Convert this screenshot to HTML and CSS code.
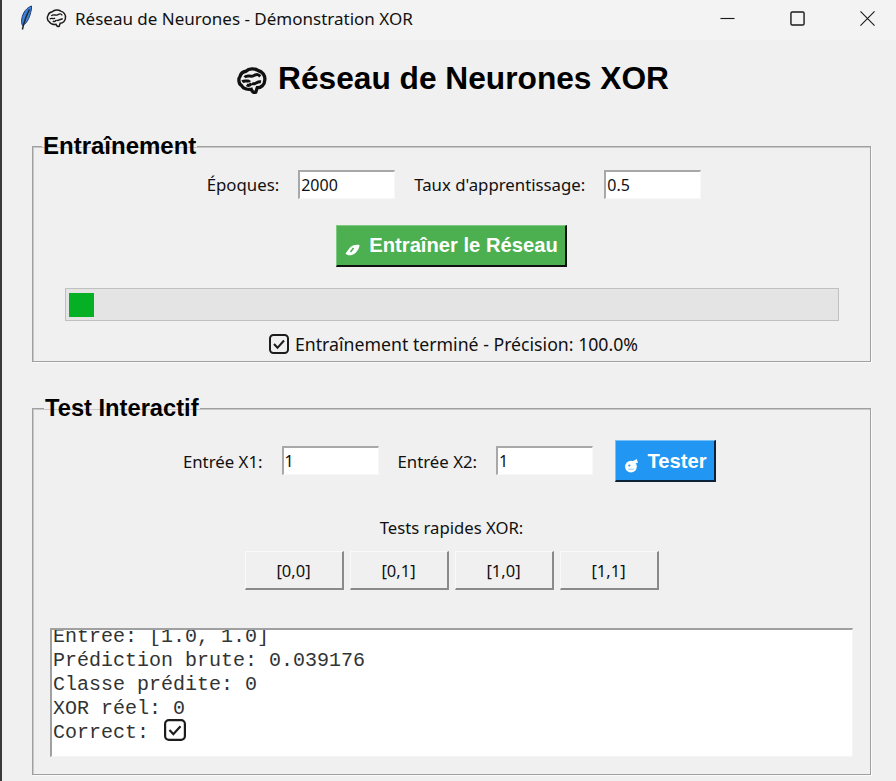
FILE: index.html
```html
<!DOCTYPE html>
<html lang="fr">

<head>
  <meta charset="utf-8">
  <title>Réseau de Neurones - Démonstration XOR</title>
  <link rel="stylesheet" href="styles.css">
</head>

<body>
  <div class="titlebar">
    <svg class="feather" viewBox="0 0 14 26">
      <path d="M12.500 1C8 2.500 4 7 2.800 13.500C2.300 16.500 2.500 18.500 3.500 20.500C6.500 19.500 9.500 15 11 10C12 6.500 12.800 3.500 12.500 1Z" fill="#3f7fd6" stroke="#1d3f78" stroke-width="1"/>
      <path d="M10.500 4.500C8 9 5.500 15 3.400 24.500" fill="none" stroke="#20262e" stroke-width="1.500"/>
    </svg>
    <svg class="brain-small" viewBox="0 0 20 20">
      <path d="M6 3.500C8 1.500 12 1.500 14 3C17 3.500 19 6.500 18.500 9.500C18.500 12.500 16 14.500 13.500 14.500L12.500 17.500C11 18 10 17 9.500 15.500C7 16 4 15 3 13C1 12 .8 8.500 2 7C2.500 5 4 3.800 6 3.500Z" fill="none" stroke="#1a1a1a" stroke-width="1.400"/>
      <path d="M5 7.500C7 5.500 9 7.500 11 6.500S14 5 15.500 7M3.500 10.500C5.500 9 7.500 11 8.500 9.500M10 11.500C12 13 13 10 16 10.500M6.500 12.500C8 13.500 9 12.500 9.500 11.500" fill="none" stroke="#1a1a1a" stroke-width="1.300"/>
    </svg>
    <span class="window-title">Réseau de Neurones - Démonstration XOR</span>
    <div class="window-buttons">
      <svg viewBox="0 0 16 16"><path d="M.500 8H15.500" stroke="#1a1a1a" stroke-width="1.200" fill="none"/></svg>
      <svg viewBox="0 0 16 16"><rect x="1" y="1" width="14" height="14" rx="1.500" stroke="#1a1a1a" stroke-width="1.500" fill="none"/></svg>
      <svg viewBox="0 0 16 16"><path d="M.500 .500L15.500 15.500M15.500 .500L.500 15.500" stroke="#1a1a1a" stroke-width="1.200" fill="none"/></svg>
    </div>
  </div>

  <h1 class="app-title">
    <svg class="brain-big" viewBox="0 0 20 20">
      <path d="M6 3.500C8 1.500 12 1.500 14 3C17 3.500 19 6.500 18.500 9.500C18.500 12.500 16 14.500 13.500 14.500L12.500 17.500C11 18 10 17 9.500 15.500C7 16 4 15 3 13C1 12 .8 8.500 2 7C2.500 5 4 3.800 6 3.500Z" fill="none" stroke="#111" stroke-width="2.200"/>
      <path d="M5 7.500C7 5.500 9 7.500 11 6.500S14 5 15.500 7M3.500 10.500C5.500 9 7.500 11 8.500 9.500M10 11.500C12 13 13 10 16 10.500M6.500 12.500C8 13.500 9 12.500 9.500 11.500" fill="none" stroke="#111" stroke-width="2"/>
    </svg>
    Réseau de Neurones XOR
  </h1>

  <fieldset class="group group-train">
    <legend>Entraînement</legend>
    <div class="row params-row">
      <label class="field-label">Époques:</label>
      <input class="entry" value="2000">
      <label class="field-label">Taux d'apprentissage:</label>
      <input class="entry" value="0.5">
    </div>
    <div class="row train-row">
      <button class="action action-green">
        <svg class="action-icon" viewBox="0 0 16 12"><path d="M1 9.500L5.500 3.500C8 1 12 .5 15 1C15 4 12.500 8 9.500 10C7 11.500 3 12 1 9.500Z" fill="#fff"/><path d="M6 8L9 4" stroke="#4caf50" stroke-width="1.500"/></svg>
        Entraîner le Réseau
      </button>
    </div>
    <div class="progress"><div class="progress-fill"></div></div>
    <div class="status">
      <svg class="check" viewBox="0 0 20 20"><rect x="1" y="1" width="18" height="18" rx="3.500" fill="none" stroke="#1c1c1c" stroke-width="2"/><path d="M5 10L8.500 13.800L15 6.500" fill="none" stroke="#1c1c1c" stroke-width="2"/></svg>
      Entraînement terminé - Précision: 100.0%
    </div>
  </fieldset>

  <fieldset class="group group-test">
    <legend>Test Interactif</legend>
    <div class="row test-row">
      <label class="field-label">Entrée X1:</label>
      <input class="entry" value="1">
      <label class="field-label">Entrée X2:</label>
      <input class="entry" value="1">
      <button class="action action-blue">
        <svg class="action-icon icon-test" viewBox="0 0 14 14"><circle cx="6.500" cy="8" r="5.500" fill="#fff"/><path d="M8 3L12 1L13 4.500L9 5.500Z" fill="#fff"/><circle cx="5" cy="7" r="1" fill="#2196f3"/><path d="M4 10.500H9" stroke="#9ccbf5" stroke-width="1"/></svg>
        Tester
      </button>
    </div>
    <div class="quick-label">Tests rapides XOR:</div>
    <div class="quick-row">
      <button class="quick">[0,0]</button>
      <button class="quick">[0,1]</button>
      <button class="quick">[1,0]</button>
      <button class="quick">[1,1]</button>
    </div>
    <div class="output">
      <div class="output-text">
        <div>Entrée: [1.0, 1.0]</div>
        <div>Prédiction brute: 0.039176</div>
        <div>Classe prédite: 0</div>
        <div>XOR réel: 0</div>
        <div class="output-last">Correct: <svg class="check check-mono" viewBox="0 0 20 20"><rect x="1" y="1" width="18" height="18" rx="3.500" fill="none" stroke="#1c1c1c" stroke-width="2"/><path d="M5 10L8.500 13.800L15 6.500" fill="none" stroke="#1c1c1c" stroke-width="2"/></svg></div>
      </div>
    </div>
  </fieldset>
</body>

</html>
```

FILE: styles.css
```css
html, body {
  margin: 0;
  height: 781px;
  overflow: hidden;
}

body {
  background-color: #f0f0f0;
  color: #111;
  font-family: 'Noto Sans', sans-serif;
  border-left: 2px solid #3a3a3c;
  box-sizing: border-box;
  width: 896px;
}

/* window title */
.titlebar {
  display: flex;
  align-items: center;
  box-sizing: border-box;
  height: 40px;
  background-color: #f3f3f3;
  padding: 0 0 4px 17px;
  font-family: 'Noto Sans', sans-serif;
  font-size: 17px;
}

.feather {
  width: 14px;
  height: 26px;
  margin-right: 13px;
}

.brain-small {
  width: 21px;
  height: 21px;
  margin-right: 8px;
}

.window-buttons {
  display: flex;
  align-items: center;
  gap: 55px;
  margin-left: auto;
  margin-right: 21px;
}

.window-buttons svg {
  width: 15px;
  height: 15px;
}

.app-title {
  display: flex;
  align-items: center;
  justify-content: center;
  gap: 11px;
  height: 34px;
  margin: 21px 0 0 0;
  padding-left: 8px;
  font-family: 'Liberation Sans', sans-serif;
  font-size: 31.7px;
  font-weight: 700;
  color: #000;
}

.brain-big {
  width: 30px;
  height: 30px;
  margin-top: 6px;
}

/* group boxes */
.group {
  box-sizing: border-box;
  width: 839px;
  margin: 0 0 0 30px;
  padding: 0;
  border: 1px solid #a0a0a0;
  box-shadow: 1px 1px 0 #fafafa, inset 1px 1px 0 #c8c8c8;
  min-width: 0;
}

.group legend {
  margin-left: 9px;
  padding: 0 1px;
  height: 24px;
  line-height: 24px;
  font-family: 'Liberation Sans', sans-serif;
  font-size: 24px;
  font-weight: 700;
  color: #000;
}

.group-train {
  height: 228px;
  margin-top: 39px;
}

.group-test {
  height: 379px;
  margin-top: 34px;
}

.group-test legend {
  margin-left: 11px;
  font-size: 23.7px;
}

.row {
  display: flex;
  align-items: center;
  justify-content: center;
}

.field-label {
  font-size: 16.8px;
  margin-right: 19px;
}

.entry {
  box-sizing: border-box;
  width: 97px;
  height: 29px;
  margin-right: 19px;
  padding: 0 1px;
  border: 0;
  border-top: 2px solid #a8a8a8;
  border-left: 2px solid #a8a8a8;
  border-right: 1px solid #f8f8f8;
  border-bottom: 1px solid #f8f8f8;
  background-color: #fff;
  font-family: 'Noto Sans', sans-serif;
  font-size: 16px;
  color: #111;
  outline: none;
}

.action {
  display: flex;
  align-items: center;
  justify-content: center;
  box-sizing: border-box;
  padding: 0;
  font-family: 'Liberation Sans', sans-serif;
  font-size: 20.2px;
  font-weight: 700;
  color: #fff;
  border-style: solid;
  border-width: 1px 2px 2px 1px;
}

.action-green {
  width: 231px;
  height: 42px;
  background-color: #4caf50;
  border-color: #7fca83 #111 #111 #7fca83;
}

.action-blue {
  width: 101px;
  height: 42px;
  padding-top: 2px;
  background-color: #2196f3;
  border-color: #7cc0f8 #0b2238 #0b2238 #7cc0f8;
}

.action-icon {
  width: 17px;
  height: 12px;
  margin: 9px 8px 0 0;
}

.icon-test {
  width: 15px;
  height: 15px;
  margin: 7px 9px 0 0;
}

.params-row {
  margin-top: 12px;
  padding-left: 24px;
}

.train-row {
  margin-top: 26px;
}

.progress {
  box-sizing: border-box;
  width: 774px;
  height: 33px;
  margin: 21px 0 0 32px;
  padding: 4px 3px;
  background-color: #e4e4e4;
  border: 1px solid #c0c0c0;
}

.progress-fill {
  width: 25px;
  height: 24px;
  background-color: #06b025;
}

.status {
  display: flex;
  align-items: center;
  justify-content: center;
  gap: 6px;
  margin-top: 12px;
  padding-left: 4px;
  font-size: 17.7px;
  line-height: 22px;
}

.check {
  width: 20px;
  height: 20px;
}

.check-mono {
  width: 22px;
  height: 22px;
  margin-left: 3px;
  vertical-align: top;
  margin-top: -2px;
}

.test-row {
  margin-top: 20px;
  padding-right: 4px;
  height: 42px;
}

.test-row .entry {
  margin-bottom: 2px;
}

.test-row .entry:last-of-type {
  margin-right: 22px;
}

.quick-label {
  margin-top: 34px;
  text-align: center;
  font-size: 16.7px;
  line-height: 24px;
}

.quick-row {
  display: flex;
  justify-content: center;
  gap: 6px;
  margin-top: 11px;
}

.quick {
  box-sizing: border-box;
  width: 99px;
  height: 39px;
  padding: 0;
  background-color: #f0f0f0;
  border-style: solid;
  border-width: 1px 2px 2px 1px;
  border-color: #fafafa #8a8a8a #8a8a8a #fafafa;
  font-family: 'Noto Sans', sans-serif;
  font-size: 16.5px;
  color: #111;
}

.output {
  box-sizing: border-box;
  width: 803px;
  height: 129px;
  margin: 38px 0 0 17px;
  overflow: hidden;
  background-color: #fff;
  border-top: 2px solid #a0a0a0;
  border-left: 2px solid #a0a0a0;
  border-right: 1px solid #f4f4f4;
  border-bottom: 1px solid #f4f4f4;
}

.output-text {
  margin: -5px 0 0 1px;
  font-family: 'Liberation Mono', monospace;
  font-size: 20px;
  line-height: 24px;
  color: #333;
}

.output-last {
  height: 24px;
}
```
